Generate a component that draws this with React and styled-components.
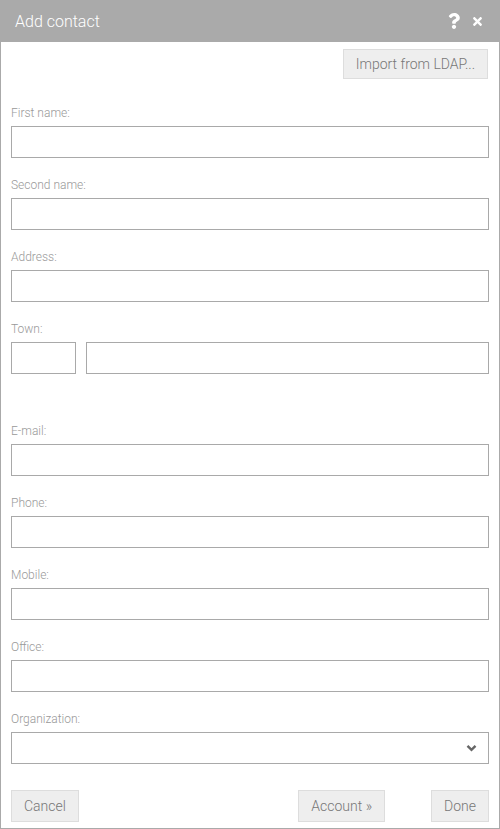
import React from "react";
import styled, { createGlobalStyle } from "styled-components";
import { FaQuestion, FaTimes } from "react-icons/fa";

const Global = createGlobalStyle`
  html, body { margin: 0; padding: 0; background: #fff; }
  body { font-family: Roboto, "Liberation Sans", sans-serif; }
  * { box-sizing: border-box; }
`;

const Dialog = styled.div`
  width: 500px;
  height: 829px;
  display: flex;
  flex-direction: column;
`;

const Header = styled.div`
  height: 42px;
  flex: none;
  background: #aaaaaa;
  display: flex;
  align-items: center;
  padding: 0 16px 0 15px;
`;

const Title = styled.div`
  color: #fff;
  font-size: 16px;
  font-weight: 300;
  flex: 1;
`;

const Tools = styled.div`
  display: flex;
  align-items: center;
  gap: 9px;
  color: #fff;
`;

const Body = styled.div`
  flex: 1;
  border: 1px solid #aaaaaa;
  border-top: none;
  padding: 7px 10px 5px 10px;
  display: flex;
  flex-direction: column;
`;

const TopBar = styled.div`
  display: flex;
  justify-content: flex-end;
  padding-right: 1px;
  margin-bottom: 27px;
`;

const Button = styled.button`
  height: ${(p) => (p.$small ? 30 : 32)}px;
  padding: 0 12px;
  background: #eeeeee;
  border: 1px solid #dddddd;
  color: #777;
  font-family: Roboto, "Liberation Sans", sans-serif;
  font-size: 14px;
  font-weight: 300;
  cursor: pointer;
`;

const Field = styled.div`
  display: flex;
  flex-direction: column;
  margin-bottom: ${(p) => (p.$extra ? 50 : 20)}px;
`;

const Label = styled.label`
  font-size: 12px;
  line-height: 14px;
  font-weight: 300;
  color: #999;
  margin-bottom: 6px;
`;

const Input = styled.input`
  height: 32px;
  width: ${(p) => p.$w || "100%"};
  flex: ${(p) => (p.$grow ? 1 : "none")};
  border: 1px solid #a9a9a9;
  background: #fff;
  outline: none;
  padding: 0 8px;
  font-family: inherit;
  font-size: 14px;
`;

const Row = styled.div`
  display: flex;
  gap: 10px;
`;

const SelectBox = styled.div`
  height: 32px;
  border: 1px solid #a9a9a9;
  display: flex;
  align-items: center;
  justify-content: flex-end;
  padding-right: 11px;
  color: #666;
`;

const Footer = styled.div`
  margin-top: 6px;
  display: flex;
  align-items: center;
`;

const Spacer = styled.div`
  flex: 1;
`;

const RightGroup = styled.div`
  display: flex;
  gap: 46px;
`;

const Chevron = () => (
  <svg width="11" height="8" viewBox="0 0 11 8">
    <path d="M1.5 1.8 L5.5 5.8 L9.5 1.8" fill="none" stroke="#666" strokeWidth="2.4" />
  </svg>
);

const fields = ["First name:", "Second name:", "Address:"];
const fields2 = ["E-mail:", "Phone:", "Mobile:", "Office:"];

export default function App() {
  return (
    <>
      <Global />
      <Dialog>
        <Header>
          <Title>Add contact</Title>
          <Tools>
            <FaQuestion size={16} />
            <FaTimes size={13} />
          </Tools>
        </Header>
        <Body>
          <TopBar>
            <Button $small>Import from LDAP...</Button>
          </TopBar>
          {fields.map((f) => (
            <Field key={f}>
              <Label>{f}</Label>
              <Input />
            </Field>
          ))}
          <Field $extra>
            <Label>Town:</Label>
            <Row>
              <Input $w="65px" />
              <Input $grow />
            </Row>
          </Field>
          {fields2.map((f) => (
            <Field key={f}>
              <Label>{f}</Label>
              <Input />
            </Field>
          ))}
          <Field>
            <Label>Organization:</Label>
            <SelectBox>
              <Chevron />
            </SelectBox>
          </Field>
          <Footer>
            <Button>Cancel</Button>
            <Spacer />
            <RightGroup>
              <Button>Account »</Button>
              <Button>Done</Button>
            </RightGroup>
          </Footer>
        </Body>
      </Dialog>
    </>
  );
}
